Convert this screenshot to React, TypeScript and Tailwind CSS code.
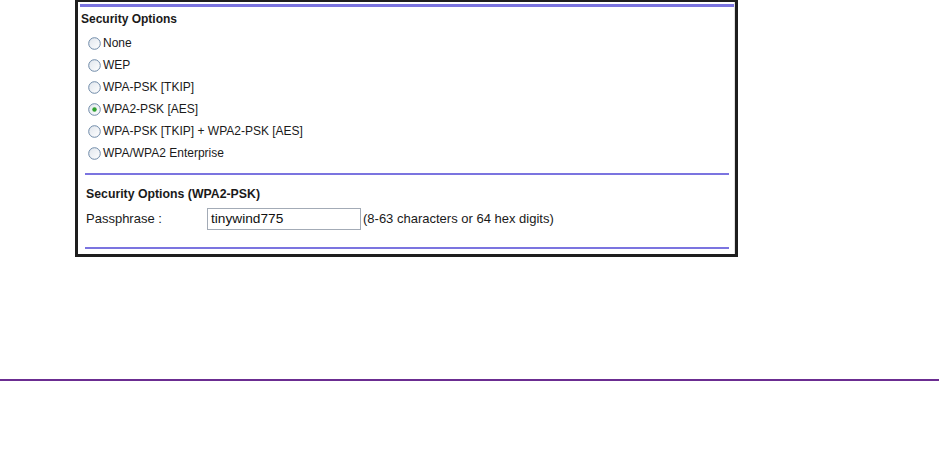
const options = [
  "None",
  "WEP",
  "WPA-PSK [TKIP]",
  "WPA2-PSK [AES]",
  "WPA-PSK [TKIP] + WPA2-PSK [AES]",
  "WPA/WPA2 Enterprise",
];

function Radio({ checked }: { checked: boolean }) {
  return (
    <svg width="13" height="13" viewBox="0 0 13 13" className="shrink-0">
      <defs>
        <linearGradient id="rb" x1="0" y1="0" x2="1" y2="1">
          <stop offset="0" stopColor="#dfe5ec" />
          <stop offset="1" stopColor="#ffffff" />
        </linearGradient>
      </defs>
      <circle cx="6.5" cy="6.5" r="5.8" fill="url(#rb)" stroke="#6f8aa8" strokeWidth="1" />
      {checked && <circle cx="6.5" cy="6.5" r="2.2" fill="#2fa12f" />}
    </svg>
  );
}

export default function App() {
  return (
    <div className="w-[939px] h-[450px] bg-white font-['Liberation_Sans',Arial,sans-serif] text-[12px] text-[#1a1a1a]">
      <div className="ml-[75px] w-[663px] h-[257px] border-[3px] border-t-2 border-[#1e1e1e] box-border">
        <div className="h-full border-r border-[#e2e2e2] flex flex-col">
          <div className="mt-[2px] ml-[2px] h-[3px] bg-[#7b74e0]" />

          <p className="mt-[5px] ml-[3px] h-[14px] leading-[14px] font-bold">Security Options</p>

          <div className="mt-[6px] flex flex-col">
            {options.map((o) => (
              <label key={o} className="h-[22px] flex items-center gap-[2px] pl-[10px]">
                <Radio checked={o === "WPA2-PSK [AES]"} />
                <span className="leading-[14px]">{o}</span>
              </label>
            ))}
          </div>

          <div className="mt-[9px] ml-[7px] mr-[5px] h-[2px] bg-[#7b74e0]" />

          <p className="mt-[12px] ml-[8px] h-[14px] leading-[14px] font-bold text-[12.3px]">
            Security Options (WPA2-PSK)
          </p>

          <div className="mt-[7px] ml-[8px] h-[22px] flex items-center text-[13px]">
            <span className="w-[121px]">Passphrase :</span>
            <div className="w-[154px] h-[22px] border border-[#a3abb6] flex items-center pl-[3px] text-[13.7px] text-[#111]">
              tinywind775
            </div>
            <span className="ml-[2px]">(8-63 characters or 64 hex digits)</span>
          </div>

          <div className="mt-[17px] ml-[7px] mr-[5px] h-[2px] bg-[#7b74e0]" />
        </div>
      </div>

      <div className="mt-[122px] h-[2px] bg-[#6b2d91]" />
    </div>
  );
}
